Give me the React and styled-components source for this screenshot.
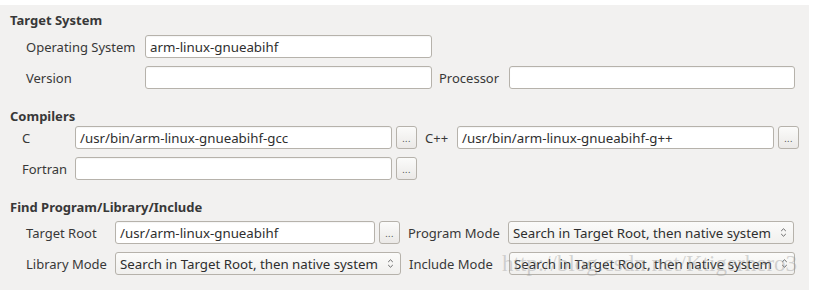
import React from 'react';
import styled, { createGlobalStyle } from 'styled-components';

const GlobalStyle = createGlobalStyle`
  html, body {
    margin: 0;
    padding: 0;
    background: #ffffff;
  }
  body {
    font-family: "Noto Sans", "Open Sans", sans-serif;
  }
`;

const Panel = styled.div`
  position: relative;
  margin-top: 5px;
  width: 809px;
  height: 285px;
  box-sizing: border-box;
  background: #f2f1f0;
  padding: 6px 0 0 10px;
  color: #383838;
  font-size: 13px;
  overflow: hidden;
`;

const Section = styled.div`
  display: flex;
  flex-direction: column;
  gap: ${({ gap }) => gap}px;
  margin-bottom: ${({ after }) => after || 0}px;
`;

const Title = styled.div`
  font-weight: bold;
  font-size: 13px;
  line-height: 18px;
  margin-bottom: ${({ after }) => after}px;
`;

const Row = styled.div`
  display: flex;
  align-items: center;
  height: 23px;
  padding-left: ${({ indent }) => indent}px;
`;

const Label = styled.span`
  width: ${({ w }) => w}px;
  flex: none;
  white-space: nowrap;
`;

const Field = styled.div`
  width: ${({ w }) => w}px;
  height: 23px;
  box-sizing: border-box;
  flex: none;
  background: #ffffff;
  border: 1px solid #b6b2ab;
  border-radius: 3px;
  padding: 0 4px;
  display: flex;
  align-items: center;
  white-space: nowrap;
  overflow: hidden;
  color: #2e2e2e;
  font-size: 13.3px;
  box-shadow: inset 0 1px 1px rgba(0, 0, 0, 0.04);
`;

const Browse = styled.div`
  width: 21px;
  height: 23px;
  box-sizing: border-box;
  flex: none;
  margin: 0 ${({ after }) => after || 0}px 0 4px;
  border: 1px solid #b6b2ab;
  border-radius: 3px;
  background: linear-gradient(#fbfbfa, #ebe9e7);
  display: flex;
  align-items: center;
  justify-content: center;
  font-size: 9px;
  color: #4a4a4a;
  padding-top: 2px;
  letter-spacing: 0.5px;
`;

const Select = styled.div`
  width: ${({ w }) => w}px;
  height: 23px;
  box-sizing: border-box;
  flex: none;
  border: 1px solid #b6b2ab;
  border-radius: 3px;
  background: linear-gradient(#fbfbfa, #f1f0ee);
  display: flex;
  align-items: center;
  justify-content: space-between;
  padding: 0 6px 0 4px;
  white-space: nowrap;
  color: #2e2e2e;
  font-size: 13.3px;
  margin-right: ${({ after }) => after || 0}px;
`;

const Spin = styled.svg`
  width: 7px;
  height: 11px;
  flex: none;
`;

const Gap = styled.span`
  width: ${({ w }) => w}px;
  flex: none;
`;

const Watermark = styled.div`
  position: absolute;
  left: 502px;
  top: 246px;
  font-family: "Liberation Serif", serif;
  font-size: 23px;
  color: rgba(150, 150, 150, 0.4);
  white-space: nowrap;
  pointer-events: none;
`;

const Arrows = () => (
  <Spin viewBox="0 0 7 11">
    <path d="M1.2 4 L3.5 1.8 L5.8 4" fill="none" stroke="#666" strokeWidth="1" />
    <path d="M1.2 7 L3.5 9.2 L5.8 7" fill="none" stroke="#666" strokeWidth="1" />
  </Spin>
);

const mode = 'Search in Target Root, then native system';

const App = () => (
  <>
    <GlobalStyle />
    <Panel>
      <Title after={6}>Target System</Title>
      <Section gap={8} after={18}>
        <Row indent={16}>
          <Label w={119}>Operating System</Label>
          <Field w={287}>arm-linux-gnueabihf</Field>
        </Row>
        <Row indent={16}>
          <Label w={119}>Version</Label>
          <Field w={287} />
          <Gap w={7} />
          <Label w={70}>Processor</Label>
          <Field w={286} />
        </Row>
      </Section>

      <Title after={1}>Compilers</Title>
      <Section gap={8} after={18}>
        <Row indent={12}>
          <Label w={53}>C</Label>
          <Field w={317}>/usr/bin/arm-linux-gnueabihf-gcc</Field>
          <Browse after={8}>...</Browse>
          <Label w={32}>C++</Label>
          <Field w={317}>/usr/bin/arm-linux-gnueabihf-g++</Field>
          <Browse>...</Browse>
        </Row>
        <Row indent={12}>
          <Label w={53}>Fortran</Label>
          <Field w={317} />
          <Browse>...</Browse>
        </Row>
      </Section>

      <Title after={5}>Find Program/Library/Include</Title>
      <Section gap={8}>
        <Row indent={16}>
          <Label w={89}>Target Root</Label>
          <Field w={260}>/usr/arm-linux-gnueabihf</Field>
          <Browse after={8}>...</Browse>
          <Label w={100}>Program Mode</Label>
          <Select w={286}>{mode}<Arrows /></Select>
        </Row>
        <Row indent={16}>
          <Label w={89}>Library Mode</Label>
          <Select w={286} after={8}>{mode}<Arrows /></Select>
          <Label w={100}>Include Mode</Label>
          <Select w={286}>{mode}<Arrows /></Select>
        </Row>
      </Section>
      <Watermark>http://blog.csdn.net/Ktigerhero3</Watermark>
    </Panel>
  </>
);

export default App;
